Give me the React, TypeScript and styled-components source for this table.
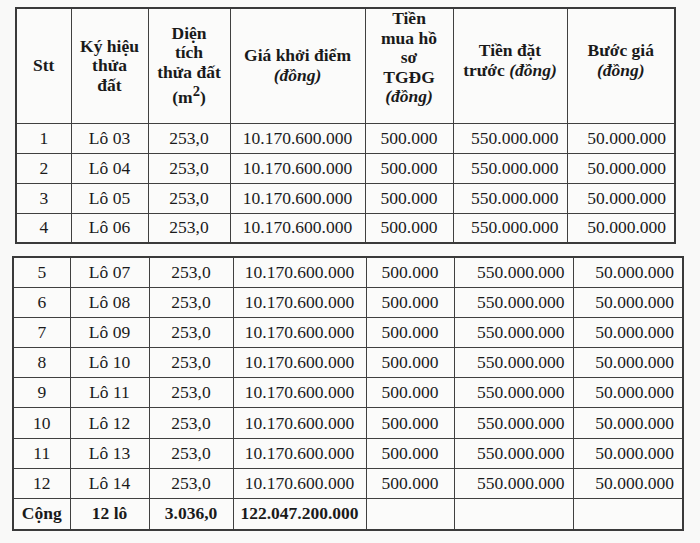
import styled, { createGlobalStyle } from "styled-components";

const GlobalStyle = createGlobalStyle`
  html, body {
    margin: 0;
    padding: 0;
    background: #f9f9f8;
  }
  body {
    font-family: "Liberation Serif", "Times New Roman", serif;
    color: #1c1c1c;
  }
`;

const topRows = [
    { stt: "1", lot: "Lô 03" },
    { stt: "2", lot: "Lô 04" },
    { stt: "3", lot: "Lô 05" },
    { stt: "4", lot: "Lô 06" },
];

const bottomRows = [
    { stt: "5", lot: "Lô 07" },
    { stt: "6", lot: "Lô 08" },
    { stt: "7", lot: "Lô 09" },
    { stt: "8", lot: "Lô 10" },
    { stt: "9", lot: "Lô 11" },
    { stt: "10", lot: "Lô 12" },
    { stt: "11", lot: "Lô 13" },
    { stt: "12", lot: "Lô 14" },
];

const topCols = [55, 77, 82, 135, 88, 114, 108];
const bottomCols = [57, 79, 84, 133, 88, 119, 110];

const Page = styled.div`
  width: 700px;
  height: 543px;
  overflow: hidden;
  display: flex;
  flex-direction: column;
  gap: 12px;
  padding-top: 7px;
  box-sizing: border-box;
`;

const Table = styled.table<{ offset: number; width: number }>`
  margin-left: ${(props) => props.offset}px;
  width: ${(props) => props.width}px;
  border-collapse: collapse;
  table-layout: fixed;
  background: #fbfbfa;
  font-family: "Liberation Serif", "Times New Roman", serif;
  font-size: 17.5px;
  color: #1a1a1a;
  border: 2px solid #3a3a3a;
`;

const HeadCell = styled.th<{ lift?: number }>`
  padding: 0 2px ${(props) => props.lift || 0}px 2px;
  border: 1.5px solid #404040;
  font-weight: bold;
  font-size: 17.5px;
  line-height: 19.5px;
  text-align: center;
  vertical-align: middle;
`;

const Unit = styled.i`
  font-weight: bold;
`;

const Row = styled.tr<{ h: number }>`
  height: ${(props) => props.h}px;
`;

const Cell = styled.td<{ align?: string; bold?: boolean }>`
  border: 1.5px solid #404040;
  padding: 0 ${(props) => (props.align === "right" ? "8px" : "2px")} 0 2px;
  text-align: ${(props) => props.align || "center"};
  vertical-align: middle;
  font-weight: ${(props) => (props.bold ? "bold" : "normal")};
  white-space: nowrap;
`;

const ValueCells = () => (
    <>
        <Cell>253,0</Cell>
        <Cell>10.170.600.000</Cell>
        <Cell>500.000</Cell>
        <Cell align="right">550.000.000</Cell>
        <Cell align="right">50.000.000</Cell>
    </>
);

const Cols = ({ widths }: { widths: number[] }) => (
    <colgroup>
        {widths.map((w, i) => (
            <col key={i} style={{ width: w }} />
        ))}
    </colgroup>
);

const App = () => {
    return (
        <>
            <GlobalStyle />
            <Page>
                <Table offset={15} width={659}>
                    <Cols widths={topCols} />
                    <thead>
                        <Row h={114}>
                            <HeadCell>Stt</HeadCell>
                            <HeadCell>
                                Ký hiệu
                                <br />
                                thửa
                                <br />
                                đất
                            </HeadCell>
                            <HeadCell>
                                Diện
                                <br />
                                tích
                                <br />
                                thửa đất
                                <br />
                                (m<sup>2</sup>)
                            </HeadCell>
                            <HeadCell>
                                Giá khởi điểm
                                <br />
                                <Unit>(đồng)</Unit>
                            </HeadCell>
                            <HeadCell lift={16}>
                                Tiền
                                <br />
                                mua hồ
                                <br />
                                sơ
                                <br />
                                TGĐG
                                <br />
                                <Unit>(đồng)</Unit>
                            </HeadCell>
                            <HeadCell lift={10}>
                                Tiền đặt
                                <br />
                                trước <Unit>(đồng)</Unit>
                            </HeadCell>
                            <HeadCell lift={10}>
                                Bước giá
                                <br />
                                <Unit>(đồng)</Unit>
                            </HeadCell>
                        </Row>
                    </thead>
                    <tbody>
                        {topRows.map((r) => (
                            <Row h={30} key={r.stt}>
                                <Cell>{r.stt}</Cell>
                                <Cell>{r.lot}</Cell>
                                <ValueCells />
                            </Row>
                        ))}
                    </tbody>
                </Table>

                <Table offset={12} width={670}>
                    <Cols widths={bottomCols} />
                    <tbody>
                        {bottomRows.map((r) => (
                            <Row h={30.2} key={r.stt}>
                                <Cell>{r.stt}</Cell>
                                <Cell>{r.lot}</Cell>
                                <ValueCells />
                            </Row>
                        ))}
                        <Row h={31}>
                            <Cell bold>Cộng</Cell>
                            <Cell bold>12 lô</Cell>
                            <Cell bold>3.036,0</Cell>
                            <Cell bold>122.047.200.000</Cell>
                            <Cell />
                            <Cell />
                            <Cell />
                        </Row>
                    </tbody>
                </Table>
            </Page>
        </>
    );
};

export default App;
